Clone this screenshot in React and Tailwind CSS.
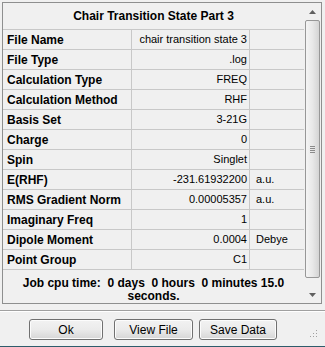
const rows = [
  ["File Name", "chair transition state 3", ""],
  ["File Type", ".log", ""],
  ["Calculation Type", "FREQ", ""],
  ["Calculation Method", "RHF", ""],
  ["Basis Set", "3-21G", ""],
  ["Charge", "0", ""],
  ["Spin", "Singlet", ""],
  ["E(RHF)", "-231.61932200", "a.u."],
  ["RMS Gradient Norm", "0.00005357", "a.u."],
  ["Imaginary Freq", "1", ""],
  ["Dipole Moment", "0.0004", "Debye"],
  ["Point Group", "C1", ""],
];

const Button = ({ label, className }) => (
  <button
    className={`h-[21px] rounded-[3px] border border-[#707070] bg-gradient-to-b from-[#f2f2f2] via-[#ebebeb] to-[#d6d6d6] text-[12px] leading-none shadow-[inset_0_0_0_1px_#fcfcfc] ${className}`}
  >
    {label}
  </button>
);

const ScrollBar = () => (
  <div className="w-[17px] flex flex-col bg-[#f0f0f0]">
    <div className="h-[17px] flex items-center justify-center">
      <svg width="7" height="4" viewBox="0 0 7 4">
        <path d="M0 4 L3.5 0 L7 4 Z" fill="#606060" />
      </svg>
    </div>
    <div className="flex-1 px-[1px]">
      <div className="h-[258px] rounded-[2px] border border-[#979797] bg-gradient-to-r from-[#f4f4f4] via-[#e8e8e8] to-[#d4d4d4] flex items-center justify-center">
        <div className="flex flex-col gap-[1px]">
          <div className="w-[5px] h-[1px] bg-[#8a8a8a]" />
          <div className="w-[5px] h-[1px] bg-[#8a8a8a]" />
          <div className="w-[5px] h-[1px] bg-[#8a8a8a]" />
          <div className="w-[5px] h-[1px] bg-[#8a8a8a]" />
        </div>
      </div>
    </div>
    <div className="h-[17px] flex items-center justify-center">
      <svg width="7" height="4" viewBox="0 0 7 4">
        <path d="M0 0 L3.5 4 L7 0 Z" fill="#606060" />
      </svg>
    </div>
  </div>
);

export default function App() {
  return (
    <div className="w-[325px] h-[347px] bg-[#f0f0f0] flex flex-col font-['Liberation_Sans',Arial,sans-serif] text-black">
      <div className="ml-[2px] mt-[2px] w-[320px] h-[302px] border border-[#8e8f8f] flex">
        <div className="w-[301px] flex flex-col">
          <div className="h-[26px] flex items-center justify-center font-bold text-[12px]">
            Chair Transition State Part 3
          </div>
          {rows.map(([label, value, unit]) => (
            <div key={label} className="h-[20px] border-t border-[#c8c8c8] flex items-center">
              <div className="w-[129px] h-full border-r border-[#c8c8c8] pl-[4px] flex items-center font-bold text-[12px]">
                {label}
              </div>
              <div className="w-[118px] h-full border-r border-[#c8c8c8] pr-[2px] flex items-center justify-end text-[11px]">
                {value}
              </div>
              <div className="flex-1 pl-[6px] text-[11px]">{unit}</div>
            </div>
          ))}
          <div className="flex-1 border-t border-[#c8c8c8] pt-[7px] text-center font-bold text-[12px] leading-[13px] whitespace-pre">
            {"Job cpu time:  0 days  0 hours  0 minutes 15.0\nseconds."}
          </div>
        </div>
        <ScrollBar />
      </div>
      <div className="mt-[6px] h-[2px] border-t border-[#a0a0a0] border-b border-b-white" />
      <div className="mt-[7px] flex items-center relative">
        <Button label="Ok" className="ml-[29px] w-[74px]" />
        <Button label="View File" className="ml-[11px] w-[79px]" />
        <Button label="Save Data" className="ml-[6px] w-[78px]" />
        <svg className="absolute left-[309px] top-[10px]" width="9" height="9" viewBox="0 0 9 9">
          <rect x="7" y="1" width="1" height="1" fill="#a0a0a0" />
          <rect x="4" y="4" width="1" height="1" fill="#a0a0a0" />
          <rect x="7" y="4" width="1" height="1" fill="#a0a0a0" />
          <rect x="1" y="7" width="1" height="1" fill="#a0a0a0" />
          <rect x="4" y="7" width="1" height="1" fill="#a0a0a0" />
          <rect x="7" y="7" width="1" height="1" fill="#a0a0a0" />
        </svg>
      </div>
      <div className="mt-auto h-[1px] bg-[#2e5c6b]" />
    </div>
  );
}
